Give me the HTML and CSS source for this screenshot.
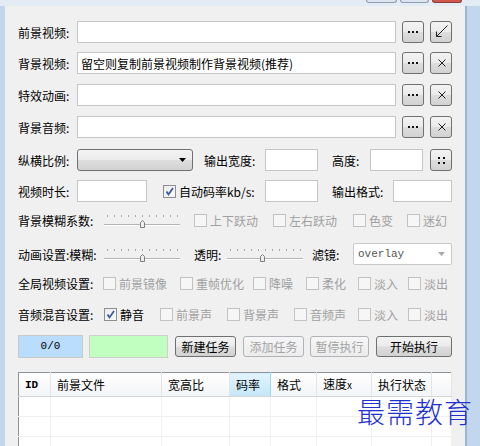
FILE: index.html
```html
<!DOCTYPE html>
<html lang="zh-CN">
<head>
    <meta charset="UTF-8">
    <title>视频合成</title>
    <link rel="stylesheet" href="styles.css">
</head>
<body>
    <div class="window">
        <div class="titlebar">
            <span class="cap"></span>
            <span class="cap mid"></span>
            <span class="cap close"></span>
        </div>
        <div class="frame">
            <div class="client">
                <div class="form">
                    <!-- 文件选择 -->
                    <div class="row">
                        <label class="lbl">前景视频:</label>
                        <input class="field grow" type="text">
                        <button class="btn sq gap6"><svg width="10" height="3"><rect x="0" y="0" width="2" height="2"/><rect x="4" y="0" width="2" height="2"/><rect x="8" y="0" width="2" height="2"/></svg></button>
                        <button class="btn sq gap6"><svg width="22" height="22" class="ico"><path d="M16.5 4.5 L5.5 15.5 M5.5 10.5 V15.5 H10.5"/></svg></button>
                    </div>
                    <div class="row">
                        <label class="lbl">背景视频:</label>
                        <input class="field grow" type="text" value="留空则复制前景视频制作背景视频(推荐)">
                        <button class="btn sq gap6"><svg width="10" height="3"><rect x="0" y="0" width="2" height="2"/><rect x="4" y="0" width="2" height="2"/><rect x="8" y="0" width="2" height="2"/></svg></button>
                        <button class="btn sq gap6"><svg width="22" height="22" class="ico"><path d="M7.5 7.5 L14.5 14.5 M14.5 7.5 L7.5 14.5"/></svg></button>
                    </div>
                    <div class="row">
                        <label class="lbl">特效动画:</label>
                        <input class="field grow" type="text">
                        <button class="btn sq gap6"><svg width="10" height="3"><rect x="0" y="0" width="2" height="2"/><rect x="4" y="0" width="2" height="2"/><rect x="8" y="0" width="2" height="2"/></svg></button>
                        <button class="btn sq gap6"><svg width="22" height="22" class="ico"><path d="M7.5 7.5 L14.5 14.5 M14.5 7.5 L7.5 14.5"/></svg></button>
                    </div>
                    <div class="row">
                        <label class="lbl">背景音频:</label>
                        <input class="field grow" type="text">
                        <button class="btn sq gap6"><svg width="10" height="3"><rect x="0" y="0" width="2" height="2"/><rect x="4" y="0" width="2" height="2"/><rect x="8" y="0" width="2" height="2"/></svg></button>
                        <button class="btn sq gap6"><svg width="22" height="22" class="ico"><path d="M7.5 7.5 L14.5 14.5 M14.5 7.5 L7.5 14.5"/></svg></button>
                    </div>

                    <!-- 输出尺寸 -->
                    <div class="row">
                        <label class="lbl">纵横比例:</label>
                        <div class="combo ratio"><svg width="7" height="4"><path d="M0 0 H7 L3.5 4 Z"/></svg></div>
                        <label class="lbl w61 ml11">输出宽度:</label>
                        <input class="field w53" type="text">
                        <label class="lbl w38 ml14">高度:</label>
                        <input class="field w53" type="text">
                        <button class="btn sq gap7"><svg width="7" height="7"><rect x="0" y="0" width="2" height="2"/><rect x="5" y="0" width="2" height="2"/><rect x="0" y="5" width="2" height="2"/><rect x="5" y="5" width="2" height="2"/></svg></button>
                    </div>
                    <div class="row">
                        <label class="lbl">视频时长:</label>
                        <input class="field w70" type="text">
                        <label class="chk w102 ml16"><span class="box on"><svg width="11" height="11"><path d="M2.5 5.5 L4.5 8.5 L9 2"/></svg></span>自动码率kb/s:</label>
                        <input class="field w53" type="text">
                        <label class="lbl w61 ml14">输出格式:</label>
                        <input class="field grow" type="text">
                    </div>

                    <!-- 效果 -->
                    <div class="row">
                        <label class="lbl w86">背景模糊系数:</label>
                        <svg class="slider" width="76" height="16"><g class="ticks"><rect x="3" y="3" width="1" height="2"/><rect x="10" y="3" width="1" height="2"/><rect x="17" y="3" width="1" height="2"/><rect x="24" y="3" width="1" height="2"/><rect x="31" y="3" width="1" height="2"/><rect x="38" y="3" width="1" height="2"/><rect x="45" y="3" width="1" height="2"/><rect x="52" y="3" width="1" height="2"/><rect x="59" y="3" width="1" height="2"/><rect x="66" y="3" width="1" height="2"/><rect x="73" y="3" width="1" height="2"/></g><rect class="track" x="0" y="12" width="76" height="1"/><rect class="hl" x="0" y="13" width="76" height="1"/><path class="thumb" d="M36.5 15.5 V10.5 L38.5 8.5 L40.5 10.5 V15.5 Z"/></svg>
                        <label class="chk off w79 ml14"><span class="box"></span>上下跃动</label>
                        <label class="chk off w80"><span class="box"></span>左右跃动</label>
                        <label class="chk off w54"><span class="box"></span>色变</label>
                        <label class="chk off"><span class="box"></span>迷幻</label>
                    </div>
                    <div class="row">
                        <label class="lbl w86">动画设置:模糊:</label>
                        <svg class="slider" width="76" height="16"><g class="ticks"><rect x="3" y="3" width="1" height="2"/><rect x="10" y="3" width="1" height="2"/><rect x="17" y="3" width="1" height="2"/><rect x="24" y="3" width="1" height="2"/><rect x="31" y="3" width="1" height="2"/><rect x="38" y="3" width="1" height="2"/><rect x="45" y="3" width="1" height="2"/><rect x="52" y="3" width="1" height="2"/><rect x="59" y="3" width="1" height="2"/><rect x="66" y="3" width="1" height="2"/><rect x="73" y="3" width="1" height="2"/></g><rect class="track" x="0" y="12" width="76" height="1"/><rect class="hl" x="0" y="13" width="76" height="1"/><path class="thumb" d="M36.5 15.5 V10.5 L38.5 8.5 L40.5 10.5 V15.5 Z"/></svg>
                        <label class="lbl w33 ml14">透明:</label>
                        <svg class="slider" width="76" height="16"><g class="ticks"><rect x="3" y="3" width="1" height="2"/><rect x="10" y="3" width="1" height="2"/><rect x="17" y="3" width="1" height="2"/><rect x="24" y="3" width="1" height="2"/><rect x="31" y="3" width="1" height="2"/><rect x="38" y="3" width="1" height="2"/><rect x="45" y="3" width="1" height="2"/><rect x="52" y="3" width="1" height="2"/><rect x="59" y="3" width="1" height="2"/><rect x="66" y="3" width="1" height="2"/><rect x="73" y="3" width="1" height="2"/></g><rect class="track" x="0" y="12" width="76" height="1"/><rect class="hl" x="0" y="13" width="76" height="1"/><path class="thumb" d="M33.5 15.5 V10.5 L35.5 8.5 L37.5 10.5 V15.5 Z"/></svg>
                        <label class="lbl w41 ml9">滤镜:</label>
                        <div class="combo flat grow"><span class="mono">overlay</span><svg width="7" height="4"><path d="M0 0 H7 L3.5 4 Z"/></svg></div>
                    </div>
                    <div class="row">
                        <label class="lbl w85">全局视频设置:</label>
                        <label class="chk off w77"><span class="box"></span>前景镜像</label>
                        <label class="chk off w73"><span class="box"></span>重帧优化</label>
                        <label class="chk off w53"><span class="box"></span>降噪</label>
                        <label class="chk off w52"><span class="box"></span>柔化</label>
                        <label class="chk off w50"><span class="box"></span>淡入</label>
                        <label class="chk off"><span class="box"></span>淡出</label>
                    </div>
                    <div class="row">
                        <label class="lbl w86">音频混音设置:</label>
                        <label class="chk w56"><span class="box on"><svg width="11" height="11"><path d="M2.5 5.5 L4.5 8.5 L9 2"/></svg></span>静音</label>
                        <label class="chk off w67"><span class="box"></span>前景声</label>
                        <label class="chk off w67"><span class="box"></span>背景声</label>
                        <label class="chk off w64"><span class="box"></span>音频声</label>
                        <label class="chk off w50"><span class="box"></span>淡入</label>
                        <label class="chk off"><span class="box"></span>淡出</label>
                    </div>

                    <!-- 任务控制 -->
                    <div class="row">
                        <div class="counter">0/0</div>
                        <div class="progress"></div>
                        <button class="btn task w61 gap7">新建任务</button>
                        <button class="btn task w61 gap7" disabled>添加任务</button>
                        <button class="btn task w59 gap6" disabled>暂停执行</button>
                        <button class="btn task w76 gap7">开始执行</button>
                    </div>
                </div>

                <table class="tasks">
                    <colgroup>
                        <col class="c-id"><col class="c-file"><col class="c-ratio"><col class="c-rate"><col class="c-fmt"><col class="c-speed"><col class="c-state"><col>
                    </colgroup>
                    <thead>
                        <tr>
                            <th class="mono">ID</th><th>前景文件</th><th>宽高比</th><th class="sorted">码率</th><th>格式</th><th>速度<small>x</small></th><th>执行状态</th><th></th>
                        </tr>
                    </thead>
                    <tbody>
                        <tr><td></td><td></td><td></td><td></td><td></td><td></td><td></td><td></td></tr>
                        <tr><td></td><td></td><td></td><td></td><td></td><td></td><td></td><td></td></tr>
                        <tr><td></td><td></td><td></td><td></td><td></td><td></td><td></td><td></td></tr>
                    </tbody>
                </table>
            </div>
        </div>
        <div class="watermark">最需教育</div>
    </div>
</body>
</html>
```

FILE: styles.css
```css
* {
    box-sizing: border-box;
}

body {
    margin: 0;
    font-family: "Noto Sans CJK SC", "Noto Sans", sans-serif;
    font-size: 12px;
    color: #000;
}

.window {
    position: relative;
    width: 480px;
    height: 446px;
    overflow: hidden;
    background: #c2d7ed;
}

.titlebar {
    height: 6px;
    background: #e3ebf4;
    display: flex;
    justify-content: flex-end;
    padding-right: 18px;
}

.cap {
    width: 31px;
    height: 3px;
    margin-left: 3px;
    border: 1px solid #8d9db3;
    border-top: none;
    border-radius: 0 0 3px 3px;
    background: #dbe4ef;
}

.cap.mid {
    width: 29px;
}

.cap.close {
    width: 30px;
    background: #d0574e;
    border-color: #8e3b34;
}

.frame {
    height: 440px;
    padding-left: 5px;
}

.client {
    width: 462px;
    height: 100%;
    background: #f0f0f0;
    border-right: 2px solid #9bb5d2;
    padding: 10px 13px 0 13px;
}

.form {
    display: grid;
    grid-template-columns: 100%;
    grid-template-rows: 32px 30px 34px 30px 36px 26px 32px 36px 22px 41px 23px;
    align-items: center;
}

.row {
    display: flex;
    align-items: center;
    white-space: nowrap;
    min-width: 0;
}

.lbl {
    width: 59px;
    flex: none;
}

.grow {
    flex: 1;
    width: 0;
    min-width: 0;
}

.field {
    height: 22px;
    border: 1px solid #c6c6c6;
    background: #fff;
    padding: 0 3px;
    font: inherit;
    outline: none;
}

.btn {
    height: 22px;
    flex: none;
    display: flex;
    align-items: center;
    justify-content: center;
    padding: 0;
    border: 1px solid #707070;
    border-radius: 3px;
    background: linear-gradient(#f3f3f3 0%, #ebebeb 48%, #dddddd 52%, #d2d2d2 100%);
    font: inherit;
    color: #000;
}

.btn svg {
    fill: #111;
}

.btn .ico {
    fill: none;
    stroke: #222;
    stroke-width: 1;
}

.btn:disabled {
    border-color: #b0b4b8;
    background: linear-gradient(#f6f6f6, #ececec);
    color: #a3a3a3;
}

.sq {
    width: 22px;
}

.task {
    height: 21px;
}

.gap6 { margin-left: 6px; }
.gap7 { margin-left: 7px; }
.ml9 { margin-left: 9px; }
.ml11 { margin-left: 11px; }
.ml14 { margin-left: 14px; }
.ml16 { margin-left: 16px; }

.w33 { width: 33px; }
.w38 { width: 38px; }
.w41 { width: 41px; }
.w50 { width: 50px; }
.w52 { width: 52px; }
.w53 { width: 53px; }
.w54 { width: 54px; }
.w56 { width: 56px; }
.w59 { width: 59px; }
.w61 { width: 61px; }
.w64 { width: 64px; }
.w67 { width: 67px; }
.w70 { width: 70px; }
.w73 { width: 73px; }
.w76 { width: 76px; }
.w77 { width: 77px; }
.w79 { width: 79px; }
.w80 { width: 80px; }
.w85 { width: 85px; }
.w86 { width: 86px; }
.w102 { width: 102px; }

.combo {
    height: 22px;
    display: flex;
    align-items: center;
    justify-content: flex-end;
    padding-right: 6px;
    border: 1px solid #707070;
    border-radius: 3px;
    background: linear-gradient(#f3f3f3 0%, #ebebeb 48%, #dddddd 52%, #d2d2d2 100%);
}

.combo.ratio {
    width: 116px;
    flex: none;
}

.combo svg {
    fill: #000;
}

.combo.flat {
    justify-content: space-between;
    padding: 0 6px 0 4px;
    background: #fff;
    border-color: #c9c9c9;
    border-radius: 2px;
}

.combo.flat svg {
    fill: #a8a8a8;
}

.mono {
    font-family: "Liberation Mono", "DejaVu Sans Mono", monospace;
    font-size: 11px;
    color: #555;
}

.slider {
    flex: none;
}

.slider .ticks {
    fill: #a9a9a9;
}

.slider .track {
    fill: #b4b4b4;
}

.slider .hl {
    fill: #fff;
}

.slider .thumb {
    fill: #efefef;
    stroke: #7d7d7d;
}

.chk {
    display: flex;
    align-items: center;
    flex: none;
}

.chk.off {
    color: #a0a0a0;
}

.box {
    width: 13px;
    height: 13px;
    margin-right: 3px;
    border: 1px solid #c2c2c2;
    background: #f6f6f6;
    display: flex;
    align-items: center;
    justify-content: center;
}

.box.on {
    border-color: #8e8f8f;
    background: linear-gradient(135deg, #e9ebee, #fcfcfc);
}

.box.on svg {
    fill: none;
    stroke: #3d5a9e;
    stroke-width: 1.8;
}

.counter {
    width: 65px;
    height: 23px;
    flex: none;
    background: #badcfd;
    border: 1px solid #c9c9c9;
    text-align: center;
    line-height: 21px;
    font-family: "Liberation Mono", "DejaVu Sans Mono", monospace;
    font-size: 11px;
}

.progress {
    width: 79px;
    height: 23px;
    flex: none;
    margin-left: 6px;
    background: #c0ffc0;
    border: 1px solid #cfcfcf;
}

.tasks {
    width: 434px;
    margin-top: 14px;
    table-layout: fixed;
    border-collapse: collapse;
    border: 1px solid #8e9398;
    background: #fff;
}

.c-id { width: 32px; }
.c-file { width: 111px; }
.c-ratio { width: 68px; }
.c-rate { width: 41px; }
.c-fmt { width: 46px; }
.c-speed { width: 55px; }
.c-state { width: 60px; }

.tasks th {
    height: 24px;
    padding: 0 0 0 6px;
    line-height: 12px;
    text-align: left;
    font-weight: normal;
    background: linear-gradient(#ffffff, #f3f4f6);
    border-right: 1px solid #e3e5e8;
    border-bottom: 1px solid #d5d5d5;
}

.tasks th.mono {
    color: #000;
    font-weight: bold;
}

.tasks th.sorted {
    background: linear-gradient(#e3f4fd, #c4e6f8);
    border-left: 1px solid #96d9f9;
    border-right: 1px solid #96d9f9;
}

.tasks th small {
    font-size: 10px;
}

.tasks td {
    height: 20px;
    border-right: 1px solid #f0f0f0;
    border-bottom: 1px solid #f0f0f0;
}

.watermark {
    position: absolute;
    left: 357px;
    top: 397px;
    font-size: 28px;
    line-height: 28px;
    letter-spacing: 1px;
    font-weight: 300;
    color: #1f32d0;
}
```
